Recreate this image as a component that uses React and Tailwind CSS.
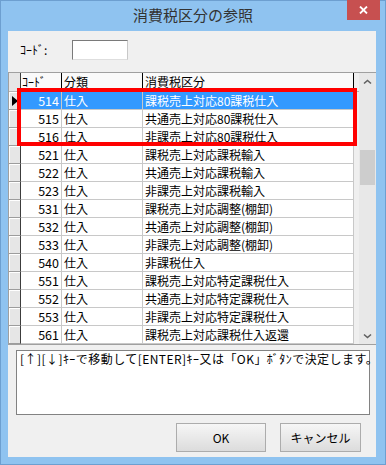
import React from "react";

const rows = [
  ["514", "仕入", "課税売上対応80課税仕入"],
  ["515", "仕入", "共通売上対応80課税仕入"],
  ["516", "仕入", "非課売上対応80課税仕入"],
  ["521", "仕入", "課税売上対応課税輸入"],
  ["522", "仕入", "共通売上対応課税輸入"],
  ["523", "仕入", "非課売上対応課税輸入"],
  ["531", "仕入", "課税売上対応調整(棚卸)"],
  ["532", "仕入", "共通売上対応調整(棚卸)"],
  ["533", "仕入", "非課売上対応調整(棚卸)"],
  ["540", "仕入", "非課税仕入"],
  ["551", "仕入", "課税売上対応特定課税仕入"],
  ["552", "仕入", "共通売上対応特定課税仕入"],
  ["553", "仕入", "非課売上対応特定課税仕入"],
  ["561", "仕入", "課税売上対応課税仕入返還"],
];

const Chevron = ({ down }) => (
  <svg width="9" height="6" viewBox="0 0 9 6" className="block">
    <path
      d={down ? "M1 1.5 L4.5 4.5 L8 1.5" : "M1 4.5 L4.5 1.5 L8 4.5"}
      fill="none"
      stroke="#606060"
      strokeWidth="1.6"
    />
  </svg>
);

const GridRow = ({ row, selected }) => {
  const cell = selected
    ? "bg-[#3399ff] text-white"
    : "bg-white text-black";
  return (
    <div className="flex h-[18px]">
      <div className="w-[12px] bg-[#e6e6e6] border-r border-b border-r-[#3c3c3c] border-b-[#9c9c9c] shadow-[inset_1px_1px_0_#ffffff] flex items-center justify-center">
        {selected && (
          <svg width="6" height="10" viewBox="0 0 6 10" className="block">
            <polygon points="0,0 6,5 0,10" fill="#000" />
          </svg>
        )}
      </div>
      <div className={`w-[41px] border-r border-b border-[#c8c8c8] text-right pr-[2px] leading-[17px] text-[12.5px] ${cell}`}>
        {row[0]}
      </div>
      <div className={`w-[81px] border-r border-b border-[#c8c8c8] pl-[2px] leading-[17px] ${cell}`}>
        {row[1]}
      </div>
      <div className={`w-[211px] border-r border-b border-[#c8c8c8] pl-[2px] leading-[17px] whitespace-nowrap overflow-hidden ${cell}`}>
        {row[2]}
      </div>
      <div className="flex-1 bg-[#efefef]" />
    </div>
  );
};

export default function App() {
  return (
    <div className="relative w-[386px] h-[465px] bg-[#8fc3f0] shadow-[inset_0_0_0_1px_#6d9fd0] font-['Noto_Sans_CJK_JP',sans-serif] text-[12px] text-black">
      {/* title bar */}
      <div className="h-[31px] flex items-center justify-center text-[15px] text-[#333333] pb-[1px]">
        消費税区分の参照
      </div>
      <div className="absolute top-0 right-[6px] w-[33px] h-[20px] bg-[#c75050] flex items-center justify-center">
        <svg width="9" height="8" viewBox="0 0 9 8">
          <path d="M1 0.5 L8 7.5 M8 0.5 L1 7.5" stroke="#fff" strokeWidth="1.8" />
        </svg>
      </div>

      <div className="ml-[8px] w-[368px] h-[426px] bg-[#f0f0f0] flex flex-col">
        {/* code filter */}
        <div className="h-[41px] flex items-start pt-[9px]">
          <span className="ml-[12px] w-[52px] leading-[20px]">ｺｰﾄﾞ:</span>
          <div className="w-[56px] h-[20px] bg-white border border-t-[#7a7a7a] border-l-[#7a7a7a] border-r-[#c8c8c8] border-b-[#dedede]" />
        </div>

        {/* grid */}
        <div className="h-[273px] flex border-t border-l border-b border-[#a0a0a0]">
          <div className="w-[350px] flex flex-col">
            <div className="flex h-[19px] border-b border-[#b4b4b4]">
              <div className="w-[12px] bg-[#e6e6e6] border-r border-[#3c3c3c]" />
              <div className="w-[41px] bg-[#fafafa] border-r border-black pl-[1px] leading-[18px]">ｺｰﾄﾞ</div>
              <div className="w-[81px] bg-[#fafafa] border-r border-black pl-[2px] leading-[18px]">分類</div>
              <div className="w-[211px] bg-[#fafafa] border-r border-black pl-[2px] leading-[18px]">消費税区分</div>
              <div className="flex-1 bg-[#efefef]" />
            </div>
            {rows.map((row, i) => (
              <GridRow key={row[0]} row={row} selected={i === 0} />
            ))}
          </div>
          {/* scrollbar */}
          <div className="w-[17px] bg-[#e8e8e8] flex flex-col">
            <div className="h-[17px] flex items-center justify-center">
              <Chevron />
            </div>
            <div className="h-[60px]" />
            <div className="h-[35px] mx-[1px] bg-[#cdcdcd]" />
            <div className="flex-1" />
            <div className="h-[17px] flex items-center justify-center">
              <Chevron down />
            </div>
          </div>
        </div>

        {/* message */}
        <div className="mt-[5px] ml-[8px] w-[354px] h-[65px] border border-[#828282] bg-white px-[3px] leading-[16px] whitespace-nowrap tracking-[0.45px]">
          [↑][↓]ｷｰで移動して[ENTER]ｷｰ又は「OK」ﾎﾞﾀﾝで決定します。
        </div>

        {/* buttons */}
        <div className="mt-[8px] flex justify-end gap-[14px] pr-[15px]">
          <button className="w-[90px] h-[29px] border border-[#acacac] bg-linear-to-b from-[#f6f6f6] to-[#dcdcdc] text-[12px]">
            OK
          </button>
          <button className="w-[81px] h-[29px] border border-[#acacac] bg-linear-to-b from-[#f6f6f6] to-[#dcdcdc] text-[12px]">
            キャンセル
          </button>
        </div>
      </div>

      {/* annotation */}
      <div className="absolute left-[17px] top-[88px] w-[340px] h-[58px] border-4 border-[#ff0000]" />
    </div>
  );
}
